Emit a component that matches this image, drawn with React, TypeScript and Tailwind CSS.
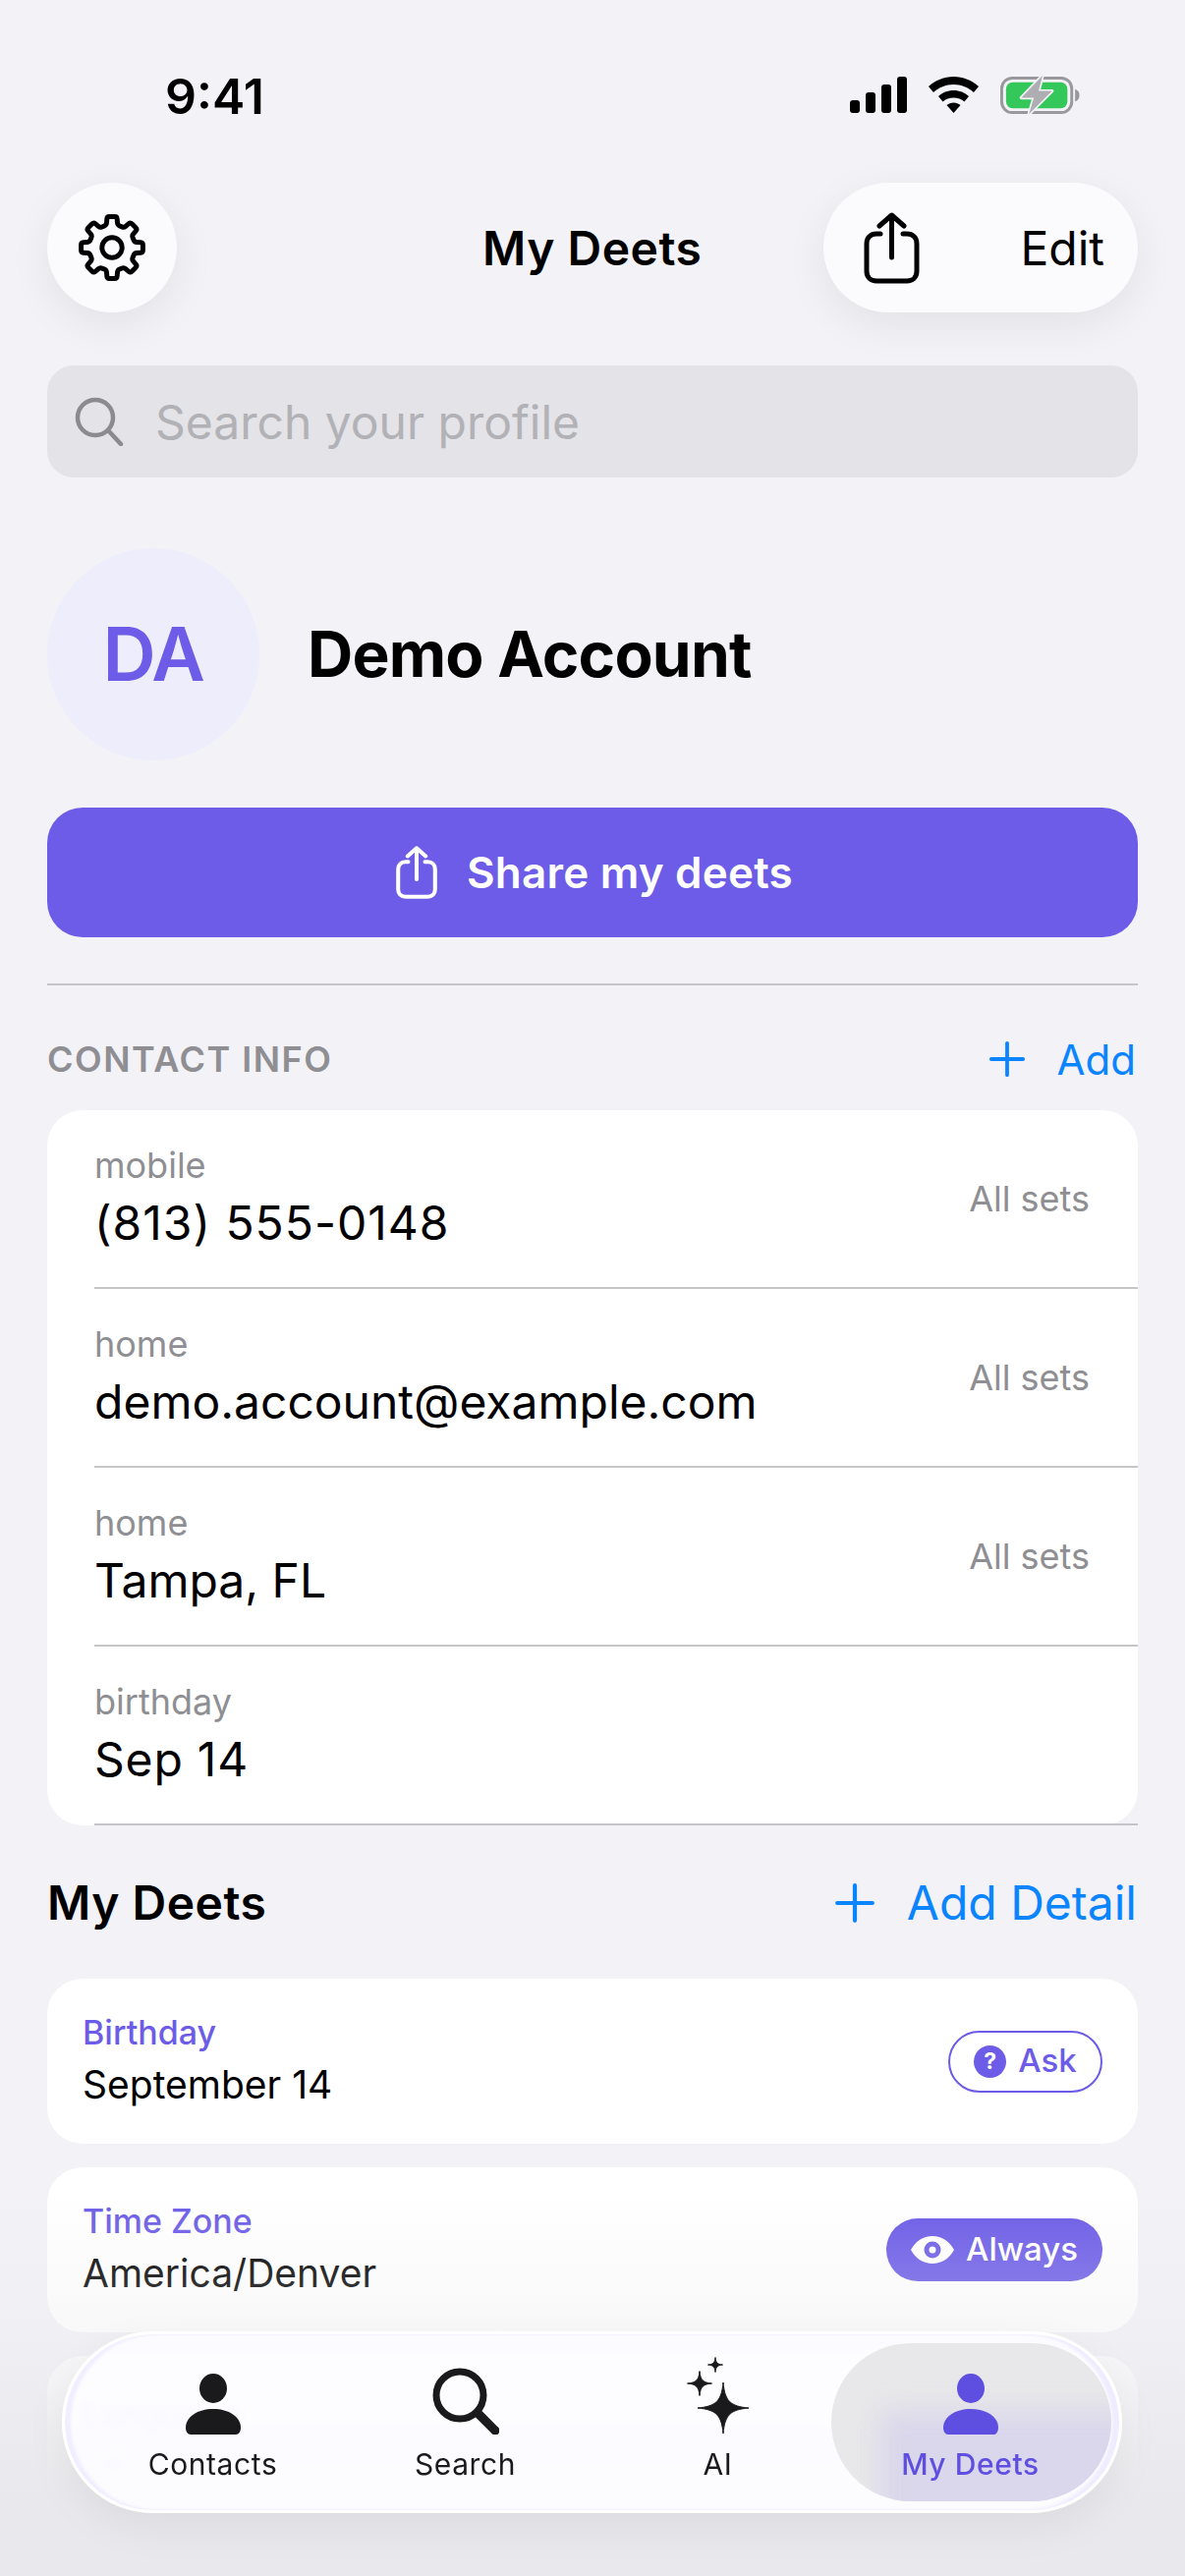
import React from "react";

const font = { fontFamily: "Inter, 'Noto Sans', sans-serif" };

function ShareIcon({ className, stroke = "currentColor", sw = 5 }: { className?: string; stroke?: string; sw?: number }) {
  return (
    <svg viewBox="0 0 57 73" className={className} fill="none" stroke={stroke} strokeWidth={sw} strokeLinecap="round" strokeLinejoin="round">
      <path d="M17 22H13C7 22 3 26 3 32V60C3 66 7 70 13 70H44C50 70 54 66 54 60V32C54 26 50 22 44 22H40" />
      <path d="M28.5 46V3M16 14L28.5 3L41 14" />
    </svg>
  );
}

function gearPath() {
  const pts: [number, number][] = [];
  const p = (r: number, deg: number): [number, number] => {
    const a = ((deg - 90) * Math.PI) / 180;
    return [12 + r * Math.cos(a), 12 + r * Math.sin(a)];
  };
  for (let i = 0; i < 8; i++) {
    const t = i * 45;
    pts.push(p(8.1, t - 14), p(10.9, t - 9), p(10.9, t + 9), p(8.1, t + 14));
  }
  const n = pts.length;
  let d = "";
  for (let i = 0; i < n; i++) {
    const cur = pts[i];
    const prev = pts[(i - 1 + n) % n];
    const next = pts[(i + 1) % n];
    const toward = (a: [number, number], b: [number, number]): [number, number] => {
      const dx = b[0] - a[0];
      const dy = b[1] - a[1];
      const len = Math.hypot(dx, dy);
      const k = Math.min(0.75, len * 0.45) / len;
      return [a[0] + dx * k, a[1] + dy * k];
    };
    const s = toward(cur, prev);
    const e = toward(cur, next);
    d += `${i === 0 ? "M" : "L"}${s[0].toFixed(2)} ${s[1].toFixed(2)}Q${cur[0].toFixed(2)} ${cur[1].toFixed(2)} ${e[0].toFixed(2)} ${e[1].toFixed(2)}`;
  }
  return d + "Z";
}

function Gear() {
  return (
    <svg viewBox="0 0 24 24" className="w-[70px] h-[70px]" fill="none" stroke="#000" strokeWidth="1.7" strokeLinejoin="round">
      <path d={gearPath()} />
      <circle cx="12" cy="12" r="3.5" />
    </svg>
  );
}

function Person({ color }: { color: string }) {
  return (
    <svg viewBox="0 0 58 62" className="w-[58px] h-[62px]" fill={color}>
      <ellipse cx="29" cy="15" rx="14" ry="15" />
      <path d="M1 55C1 44 13 36 29 36C45 36 57 44 57 55C57 59 55 62 52 62H6C3 62 1 59 1 55Z" />
    </svg>
  );
}

function Sparkles() {
  const star = (cx: number, cy: number, r: number) => {
    const k = r * 0.17;
    return `M${cx} ${cy - r}C${cx + k * 0.4} ${cy - k * 1.6} ${cx + k * 1.6} ${cy - k * 0.4} ${cx + r} ${cy}C${cx + k * 1.6} ${cy + k * 0.4} ${cx + k * 0.4} ${cy + k * 1.6} ${cx} ${cy + r}C${cx - k * 0.4} ${cy + k * 1.6} ${cx - k * 1.6} ${cy + k * 0.4} ${cx - r} ${cy}C${cx - k * 1.6} ${cy - k * 0.4} ${cx - k * 0.4} ${cy - k * 1.6} ${cx} ${cy - r}Z`;
  };
  return (
    <svg viewBox="0 0 66 80" className="w-[66px] h-[80px]" fill="#1a1a1c" stroke="#1a1a1c" strokeWidth="1" strokeLinejoin="round">
      <path d={star(38, 53, 26)} />
      <path d={star(14, 28, 12.5)} />
      <path d={star(30, 9, 7.5)} />
    </svg>
  );
}

function Plus({ className }: { className?: string }) {
  return (
    <svg viewBox="0 0 40 40" className={className} fill="none" stroke="#0a84ff" strokeWidth="4" strokeLinecap="round">
      <path d="M20 3V37M3 20H37" />
    </svg>
  );
}

function ContactRow({ label, value, tag, valueClass = "" }: { label: string; value: string; tag?: string; valueClass?: string }) {
  return (
    <div className="h-[182px] relative flex items-center justify-between pl-[48px] pr-[49px]">
      <div className="flex flex-col pb-[2px]">
        <span className="text-[36px] leading-[44px] text-[#8e8e93]">{label}</span>
        <span className={`text-[48px] leading-[62px] mt-[6px] text-black ${valueClass}`}>{value}</span>
      </div>
      {tag && <span className="text-[36px] text-[#8e8e93] -mt-[3px]">{tag}</span>}
      <div className="absolute left-[48px] right-0 bottom-0 h-[2px] bg-[#c6c6c8]" />
    </div>
  );
}

function DeetCard({ label, value, children }: { label: string; value?: string; children?: React.ReactNode }) {
  return (
    <div className="h-[168px] bg-white rounded-[36px] flex items-center justify-between pl-[36px] pr-[36px]">
      <div className="flex flex-col">
        <span className="text-[34px] leading-[44px] font-medium text-[#6c5ce7]">{label}</span>
        {value ? (
          <span className="text-[39px] leading-[54px] mt-[4px] text-black">{value}</span>
        ) : (
          <div className="w-[24px] h-[30px] mt-[16px] ml-[18px] rounded-full bg-[#8e8e93] blur-[3px]" />
        )}
      </div>
      {children}
    </div>
  );
}

export default function App() {
  return (
    <div style={font} className="relative w-[1206px] h-[2622px] overflow-hidden bg-[#f2f2f7] flex flex-col">
      {/* status bar */}
      <div className="h-[186px] shrink-0 flex justify-between pl-[168px] pr-[106px] pt-[68px]">
        <span className="text-[50px] leading-[60px] font-semibold text-black">9:41</span>
        <div className="flex items-start gap-[22px] pt-[10px]">
          <svg viewBox="0 0 58 37" className="w-[58px] h-[37px]" fill="#000">
            <rect x="0" y="24" width="10" height="13" rx="3" />
            <rect x="16" y="16" width="10" height="21" rx="3" />
            <rect x="32" y="8" width="10" height="29" rx="3" />
            <rect x="48" y="0" width="10" height="37" rx="3" />
          </svg>
          <svg viewBox="0 0 51 37" className="w-[51px] h-[37px]" fill="#000">
            <path d="M25.5 0C35 0 44 3.8 51 10L46 16C40.5 11 33.5 8 25.5 8C17.500 8 10.500 11 5 16L0 10C7 3.800 16 0 25.500 0Z" />
            <path d="M25.500 14C31.500 14 37 16.200 41 20L36.500 25.500C33.500 23 29.800 21.500 25.500 21.500C21.200 21.500 17.500 23 14.500 25.500L10 20C14 16.200 19.500 14 25.500 14Z" />
            <path d="M25.500 26.500C28 26.500 30.500 27.500 32.500 29L25.500 37L18.500 29C20.500 27.500 23 26.500 25.500 26.500Z" />
          </svg>
          <svg viewBox="0 0 84 42" className="w-[82px] h-[41px] -mt-[2px]">
            <rect x="1.500" y="3.500" width="73" height="36" rx="11" fill="none" stroke="#98989d" strokeWidth="3" />
            <rect x="6" y="8" width="64" height="27" rx="7" fill="#34c759" />
            <path d="M78 15C81 16 82.500 18 82.500 21.500C82.500 25 81 27 78 28Z" fill="#98989d" />
            <path d="M44 1L22 24H35L30 41L54 17H40Z" fill="#aeaeb2" stroke="#f2f2f7" strokeWidth="3.500" strokeLinejoin="round" paintOrder="stroke" />
          </svg>
        </div>
      </div>

      {/* nav */}
      <div className="h-[132px] shrink-0 mx-[48px] flex items-center justify-between relative">
        <div className="w-[132px] h-[132px] rounded-full bg-[#fbfbfe] flex items-center justify-center shadow-[0_12px_44px_rgba(0,0,0,0.07)]">
          <Gear />
        </div>
        <span className="absolute left-[443px] top-[34px] text-[48px] leading-[66px] font-semibold text-black tracking-[0.5px]">My Deets</span>
        <div className="w-[320px] h-[132px] rounded-full bg-[#fbfbfe] flex items-center justify-between pl-[41px] pr-[34px] shadow-[0_12px_44px_rgba(0,0,0,0.07)]">
          <ShareIcon className="w-[57px] h-[73px] text-black" />
          <span className="text-[48px] text-black mt-[2px]">Edit</span>
        </div>
      </div>

      {/* search */}
      <div className="h-[114px] shrink-0 mx-[48px] mt-[54px] rounded-[27px] bg-[#e3e3e8] flex items-center pl-[28px] gap-[32px]">
        <svg viewBox="0 0 50 50" className="w-[50px] h-[50px]" fill="none" stroke="#8a8a8f" strokeWidth="4.500" strokeLinecap="round">
          <circle cx="21" cy="21" r="18" />
          <path d="M34 34L47 48" />
        </svg>
        <span className="text-[48px] text-[#b1b1b6] mt-[2px]">Search your profile</span>
      </div>

      {/* profile */}
      <div className="shrink-0 mx-[48px] mt-[72px] flex items-center gap-[49px]">
        <div className="w-[216px] h-[216px] rounded-full bg-[#eeedfc] flex items-center justify-center">
          <span className="text-[75px] font-semibold tracking-[-1.5px] text-[#6c5ce7]">DA</span>
        </div>
        <span className="text-[64px] font-bold tracking-[-0.8px] text-black">Demo Account</span>
      </div>

      {/* share */}
      <div className="h-[132px] shrink-0 mx-[48px] mt-[48px] rounded-[36px] bg-[#6c5ce7] flex items-center justify-center gap-[30px] pl-[4px]">
        <ShareIcon className="w-[42px] h-[54px] text-white" sw={5.5} />
        <span className="text-[44px] font-semibold tracking-[0.2px] text-white">Share my deets</span>
      </div>

      <div className="h-[2px] shrink-0 mx-[48px] mt-[47px] bg-[#c6c6c8]" />

      {/* contact info header */}
      <div className="h-[92px] shrink-0 mx-[48px] mt-[29px] flex items-center justify-between">
        <span className="text-[36px] font-semibold tracking-[1.500px] text-[#8e8e93]">CONTACT INFO</span>
        <div className="flex items-center gap-[32px] pr-[2px]">
          <Plus className="w-[38px] h-[38px]" />
          <span className="text-[42px] text-[#0a84ff]">Add</span>
        </div>
      </div>

      {/* contact card */}
      <div className="shrink-0 mx-[48px] mt-[6px] bg-white rounded-[36px] flex flex-col">
        <ContactRow label="mobile" value="(813) 555-0148" tag="All sets" valueClass="tracking-[1px]" />
        <ContactRow label="home" value="demo.account@example.com" tag="All sets" />
        <ContactRow label="home" value="Tampa, FL" tag="All sets" />
        <ContactRow label="birthday" value="Sep 14" valueClass="tracking-[0.8px]" />
      </div>

      {/* deets header */}
      <div className="h-[76px] shrink-0 mx-[48px] mt-[41px] flex items-center justify-between">
        <span className="text-[48px] font-semibold tracking-[0.5px] text-black">My Deets</span>
        <div className="flex items-center gap-[32px] pr-[1px]">
          <Plus className="w-[42px] h-[42px]" />
          <span className="text-[48px] text-[#0a84ff]">Add Detail</span>
        </div>
      </div>

      {/* deets */}
      <div className="shrink-0 mx-[48px] mt-[39px] flex flex-col gap-[24px]">
        <DeetCard label="Birthday" value="September 14">
          <div className="h-[63px] w-[157px] rounded-full border-2 border-[#6c5ce7] flex items-center justify-center gap-[12px]">
            <span className="w-[33px] h-[33px] rounded-full bg-[#6c5ce7] text-white text-[23px] font-bold flex items-center justify-center">?</span>
            <span className="text-[33px] font-medium text-[#6c5ce7]">Ask</span>
          </div>
        </DeetCard>
        <DeetCard label="Time Zone" value="America/Denver">
          <div className="h-[64px] w-[220px] rounded-full bg-[#6c5ce7] flex items-center justify-center gap-[12px]">
            <svg viewBox="0 0 44 28" className="w-[44px] h-[28px]">
              <path fillRule="evenodd" fill="#fff" d="M0 14C5 5 13 0 22 0S39 5 44 14C39 23 31 28 22 28S5 23 0 14ZM22 5.500A8.500 8.500 0 1 0 22 22.500A8.500 8.500 0 1 0 22 5.500ZM22 10.500A3.500 3.500 0 1 1 22 17.500A3.500 3.500 0 1 1 22 10.500Z" />
            </svg>
            <span className="text-[33px] font-medium text-white">Always</span>
          </div>
        </DeetCard>
        <DeetCard label="Language">
          <div className="h-[64px] w-[220px] rounded-full bg-[#6c5ce7]" />
        </DeetCard>
      </div>

      {/* bottom fade */}
      <div className="absolute left-0 right-0 top-[2230px] bottom-0 pointer-events-none bg-[linear-gradient(to_bottom,rgba(233,233,237,0)_0%,rgba(233,233,237,0.3)_36%,rgba(233,233,237,1)_80%)]" />

      {/* tab bar */}
      <div className="absolute left-[63px] top-[2373px] w-[1079px] h-[185px] rounded-full bg-[#fdfcfff0] backdrop-blur-[3px] border-[3px] border-[#ffffff] shadow-[0_14px_44px_rgba(0,0,0,0.06),inset_6px_0_3px_rgba(238,234,255,0.8),inset_-7px_0_3px_rgba(238,234,255,0.9)] flex items-center pl-[22px] pr-[23px] pb-[7px]">
        <div className="absolute left-[780px] top-[9px] w-[285px] h-[161px] rounded-full bg-[#e8e8ea] overflow-hidden">
          <div className="absolute left-[50px] -right-[30px] top-[70px] -bottom-[30px] bg-[#b9abee]/30 blur-[14px]" />
        </div>
        {[
          { label: "Contacts", icon: <Person color="#1a1a1c" />, color: "text-[#1a1a1c]", w: "font-normal" },
          { label: "Search", icon: (
            <svg viewBox="0 0 68 68" className="w-[68px] h-[68px]" fill="none" stroke="#1a1a1c" strokeWidth="7" strokeLinecap="round">
              <circle cx="28" cy="28" r="24" />
              <path d="M46 46L64 64" strokeWidth="9" />
            </svg>
          ), color: "text-[#1a1a1c]", w: "font-normal" },
          { label: "AI", icon: <Sparkles />, color: "text-[#1a1a1c]", w: "font-normal" },
          { label: "My Deets", icon: <Person color="#5e4fe0" />, color: "text-[#5e4fe0]", w: "font-medium" },
        ].map((t) => (
          <div key={t.label} className="relative w-[257px] flex flex-col items-center">
            <div className="h-[80px] flex items-end justify-center">{t.icon}</div>
            <span className={`text-[30px] leading-[38px] mt-[11px] tracking-[0.6px] ${t.color} ${t.w}`}>{t.label}</span>
          </div>
        ))}
      </div>
    </div>
  );
}
